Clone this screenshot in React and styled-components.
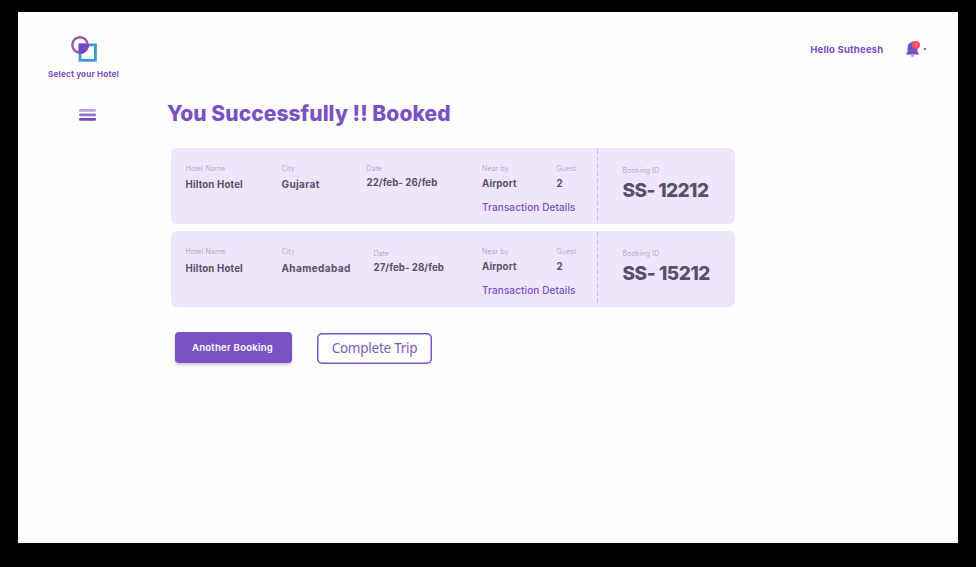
import React from "react";
import styled, { createGlobalStyle } from "styled-components";

const GlobalStyle = createGlobalStyle`
  * { box-sizing: border-box; }
  body { margin: 0; background: #000; font-family: Inter, "Open Sans", sans-serif; }
`;

const Backdrop = styled.div`
  height: 567px;
  padding: 12px 18px 24px;
  background: #000;
`;

const Page = styled.div`
  display: grid;
  grid-template-columns: 131px 1fr;
  height: 531px;
  background: #fefefe;
`;

const Sidebar = styled.aside`
  display: flex;
  flex-direction: column;
  align-items: center;
  padding-top: 23px;
`;

const LogoMark = styled.svg`
  display: block;
  margin-left: 2px;
`;

const Brand = styled.span`
  margin-top: 5px;
  line-height: 12px;
  font-size: 8.2px;
  font-weight: 700;
  letter-spacing: 0.15px;
  color: #7a4fc0;
  white-space: nowrap;
`;

const MenuIcon = styled.svg`
  display: block;
  margin: 29px 0 0 8px;
`;

const Main = styled.main`
  padding-left: 18px;
`;

const Header = styled.header`
  display: flex;
  justify-content: flex-end;
  align-items: center;
  height: 74px;
  padding-right: 30px;
`;

const Greeting = styled.span`
  margin-right: 21.5px;
  font-size: 9.6px;
  font-weight: 700;
  letter-spacing: 0.18px;
  color: #7a4fc0;
`;

const Title = styled.h1`
  margin: 14px 0 0;
  line-height: 28px;
  font-size: 21px;
  font-weight: 800;
  letter-spacing: 0.05px;
  color: #7b52c1;
`;

const Tickets = styled.div`
  display: grid;
  gap: 7px;
  width: 564px;
  margin: 20px 0 0 4px;
`;

const Ticket = styled.article`
  display: grid;
  grid-template-columns: 427px 137px;
  height: 76px;
  border-radius: 6px;
  background: #efe6fe;
`;

const Fields = styled.div`
  display: grid;
  grid-template-columns: 96px ${(p) => p.$cityWidth}px 1fr 74.5px 41.5px;
  padding: 15px 0 0 14.5px;
  background: linear-gradient(#c9bfdb 60%, transparent 0) right 0 top 1px / 1px 7.4px repeat-y;
`;

const Field = styled.div`
  padding-top: ${(p) => p.$drop || 0}px;
  white-space: nowrap;
`;

const Label = styled.div`
  line-height: 12px;
  font-size: 7px;
  font-weight: 300;
  letter-spacing: 0.15px;
  color: #a79fb6;
`;

const Value = styled.div`
  margin-top: ${(p) => p.$gap}px;
  line-height: 14px;
  font-size: ${(p) => p.$size || 9.7}px;
  font-weight: 700;
  letter-spacing: ${(p) => p.$spacing || 0}px;
  color: #57506a;
`;

const Details = styled.a`
  display: block;
  margin-top: 9px;
  line-height: 14px;
  font-size: 10px;
  font-weight: 500;
  letter-spacing: 0.1px;
  color: #7650bd;
`;

const Stub = styled.div`
  padding: 17px 0 0 24.5px;
  white-space: nowrap;
`;

const BookingId = styled.div`
  margin-top: 1px;
  line-height: 26px;
  font-size: 19px;
  font-weight: 800;
  letter-spacing: ${(p) => p.$spacing}px;
  color: #57506a;
`;

const Actions = styled.div`
  display: flex;
  gap: 25px;
  margin: 25px 0 0 8px;
`;

const PrimaryButton = styled.button`
  width: 117px;
  height: 31px;
  padding: 0 2px 0 0;
  border: 0;
  border-radius: 4px;
  background: #7b52c3;
  box-shadow: 0 2px 3px rgba(90, 60, 140, 0.3);
  color: #fff;
  font: 600 9.6px Inter, sans-serif;
  letter-spacing: 0.22px;
`;

const OutlineButton = styled.button`
  width: 115px;
  height: 31px;
  margin-top: 1px;
  padding: 0 0 2px;
  border: 0;
  border-radius: 5px;
  background: #fff;
  box-shadow: inset 0 0 0 1.5px #7b55bd;
  color: #7b5bbb;
  font: 400 13.5px "Noto Sans", sans-serif;
  letter-spacing: -0.25px;
`;

const Logo = () => (
  <LogoMark width="28" height="28" viewBox="0 0 28 28">
    <rect x="9" y="9.9" width="15.4" height="15.4" fill="none" stroke="#3d9ad3" strokeWidth="2.8" />
    <path d="M7.6 8.5H17V9.5A8 8 0 0 1 7.6 17.8Z" fill="#7448c4" />
    <circle cx="9" cy="9.9" r="7.7" fill="none" stroke="#9a59ae" strokeWidth="2.4" />
    <path d="M8.2 17.6A7.7 7.7 0 0 0 16.7 9.2" fill="none" stroke="#7448c4" strokeWidth="2.4" />
  </LogoMark>
);

const Menu = () => (
  <MenuIcon width="17" height="12" viewBox="0 0 17 12">
    <rect width="17" height="2.8" rx="1.2" fill="#bca3df" />
    <rect y="4.5" width="17" height="2.8" rx="1.2" fill="#9674cd" />
    <rect y="9" width="17" height="2.8" rx="1.2" fill="#7249b6" />
  </MenuIcon>
);

const Bell = () => (
  <svg width="23" height="18" viewBox="0 0 23 18">
    <path d="M1 13.8C2.5 12.8 2.6 11.8 2.6 8.3C2.6 4.5 4.2 2.7 6.4 2.2Q7.5 .4 8.7 2.2C11 2.7 12.5 4.6 12.5 8.3C12.5 11.8 12.6 12.8 14 13.8V14.4H1Z" fill="#7650c4" />
    <path d="M5.7 15.4H9Q7.4 17.8 5.7 15.4Z" fill="#7650c4" />
    <circle cx="11" cy="4.9" r="4" fill="#fb4f55" />
    <path d="M10.1 4Q11.1 2.9 11.7 4Q11.8 4.7 10.2 6.4H12" fill="none" stroke="#fb9a9c" strokeWidth=".7" />
    <path d="M18.5 8.2H21.5L20 10.8Z" fill="#554d61" />
  </svg>
);

const bookings = [
  { city: "Gujarat", cityWidth: 85, date: "22/feb- 26/feb", dateDrop: 0, nameGap: 3, id: "SS- 12212", idSpacing: -0.6 },
  { city: "Ahamedabad", cityWidth: 92, date: "27/feb- 28/feb", dateDrop: 2, nameGap: 4, id: "SS- 15212", idSpacing: -0.45 },
];

const BookingTicket = ({ booking }) => (
  <Ticket>
    <Fields $cityWidth={booking.cityWidth}>
      <Field>
        <Label>Hotel Name</Label>
        <Value $gap={booking.nameGap} $spacing={0.17}>Hilton Hotel</Value>
      </Field>
      <Field>
        <Label>City</Label>
        <Value $gap={booking.nameGap - 1} $size={10.1} $spacing={0.33}>{booking.city}</Value>
      </Field>
      <Field $drop={booking.dateDrop}>
        <Label>Date</Label>
        <Value $gap={1} $spacing={0.06}>{booking.date}</Value>
      </Field>
      <Field>
        <Label>Near by</Label>
        <Value $gap={2} $spacing={0.15}>Airport</Value>
        <Details>Transaction Details</Details>
      </Field>
      <Field>
        <Label>Guest</Label>
        <Value $gap={2}>2</Value>
      </Field>
    </Fields>
    <Stub>
      <Label>Booking ID</Label>
      <BookingId $spacing={booking.idSpacing}>{booking.id}</BookingId>
    </Stub>
  </Ticket>
);

export default function App() {
  return (
    <>
      <GlobalStyle />
      <Backdrop>
        <Page>
          <Sidebar>
            <Logo />
            <Brand>Select your Hotel</Brand>
            <Menu />
          </Sidebar>
          <Main>
            <Header>
              <Greeting>Hello Sutheesh</Greeting>
              <Bell />
            </Header>
            <Title>You Successfully !! Booked</Title>
            <Tickets>
              {bookings.map((b) => (
                <BookingTicket key={b.id} booking={b} />
              ))}
            </Tickets>
            <Actions>
              <PrimaryButton>Another Booking</PrimaryButton>
              <OutlineButton>Complete Trip</OutlineButton>
            </Actions>
          </Main>
        </Page>
      </Backdrop>
    </>
  );
}
